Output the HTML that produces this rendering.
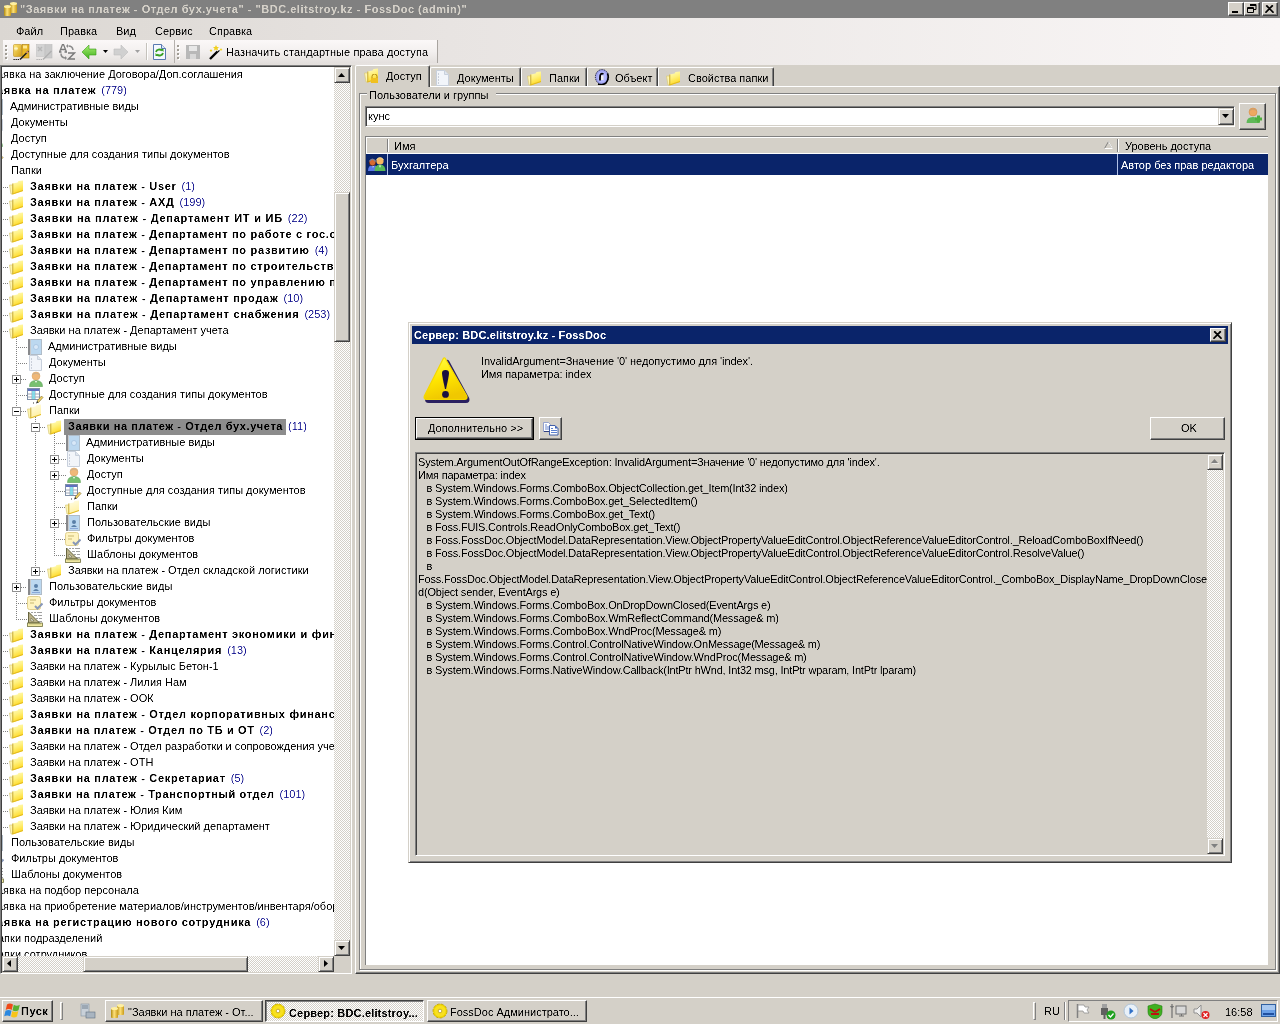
<!DOCTYPE html><html><head><meta charset="utf-8"><title>FossDoc</title><style>
*{margin:0;padding:0;box-sizing:border-box}
html,body{width:1280px;height:1024px;overflow:hidden}
body{position:relative;background:#d4d0c8;font-family:"Liberation Sans",sans-serif;font-size:11px;color:#000}
.a{position:absolute}
.t{position:absolute;white-space:nowrap;line-height:16px;font-size:11px;filter:url(#crisp)}
.b{font-weight:bold;letter-spacing:0.7px}
.cnt{color:#1c1c94}
.raised{border-style:solid;border-width:1px;border-color:#fff #404040 #404040 #fff;box-shadow:inset -1px -1px #808080}
.raised2{background:#d4d0c8;border-style:solid;border-width:1px;border-color:#fff #404040 #404040 #fff;box-shadow:inset -1px -1px #808080, inset 1px 1px #d4d0c8}
.sbtn{background:#d4d0c8;border-style:solid;border-width:1px;border-color:#d4d0c8 #404040 #404040 #d4d0c8;box-shadow:inset 1px 1px #fff, inset -1px -1px #808080}
.sunken{border-style:solid;border-width:1px;border-color:#808080 #fff #fff #808080;box-shadow:inset 1px 1px #404040, inset -1px -1px #d4d0c8}
.checker{background-color:#fff;background-image:linear-gradient(45deg,#d4d0c8 25%,transparent 25%,transparent 75%,#d4d0c8 75%),linear-gradient(45deg,#d4d0c8 25%,transparent 25%,transparent 75%,#d4d0c8 75%);background-size:2px 2px;background-position:0 0,1px 1px}
.dots-h{background-image:linear-gradient(90deg,#808080 50%,transparent 50%);background-size:2px 1px;height:1px}
.dots-v{background-image:linear-gradient(180deg,#808080 50%,transparent 50%);background-size:1px 2px;width:1px}
</style></head><body>
<svg width="0" height="0" style="position:absolute"><defs><filter id="crisp"><feComponentTransfer><feFuncA type="linear" slope="1.6" intercept="-0.3"/></feComponentTransfer></filter><linearGradient id="gf" x1="0" y1="0" x2=".3" y2="1"><stop offset="0" stop-color="#fffcc8"/><stop offset=".5" stop-color="#fff07a"/><stop offset="1" stop-color="#ffd820"/></linearGradient><linearGradient id="gfl" x1="0" y1="0" x2=".3" y2="1"><stop offset="0" stop-color="#fffde8"/><stop offset="1" stop-color="#fff0a0"/></linearGradient></defs></svg>
<div class="a" style="left:0;top:0;width:1280px;height:18px;background:#808080"></div>
<svg class="a" style="left:2px;top:1px" width="16" height="16" viewBox="0 0 16 16">
<defs><linearGradient id="gcyl" x1="0" x2="1"><stop offset="0" stop-color="#b08a10"/><stop offset=".45" stop-color="#ffe27a"/><stop offset="1" stop-color="#c89a18"/></linearGradient></defs>
<rect x="8" y="2" width="7" height="10" rx="1" fill="url(#gcyl)"/><ellipse cx="11.5" cy="2.5" rx="3.5" ry="1.5" fill="#fff0a0"/>
<rect x="2" y="5" width="7" height="10" rx="1" fill="url(#gcyl)"/><ellipse cx="5.5" cy="5.5" rx="3.5" ry="1.5" fill="#fff0a0"/>
</svg>
<div class="t b" style="left:20px;top:1px;color:#d4d0c8;letter-spacing:0.52px">"Заявки на платеж - Отдел бух.учета" - "BDC.elitstroy.kz - FossDoc (admin)"</div>
<div class="a raised2" style="left:1228px;top:2px;width:16px;height:14px"></div>
<div class="a" style="left:1232px;top:11px;width:6px;height:2px;background:#000"></div>
<div class="a raised2" style="left:1244px;top:2px;width:16px;height:14px"></div>
<svg class="a" style="left:1247px;top:4px" width="10" height="9"><path d="M3 0.5h6v5h-2M3 1.5h6M0.5 3.5h6v5h-6zM0.5 4.5h6" stroke="#000" fill="none" stroke-width="1"/></svg>
<div class="a raised2" style="left:1262px;top:2px;width:16px;height:14px"></div>
<svg class="a" style="left:1265px;top:5px" width="9" height="8"><path d="M1 0.5l7 7M8 0.5l-7 7M1.8 0.5l7 7M7.2 0.5l-7 7" stroke="#000" stroke-width="1.1"/></svg>
<div class="a" style="left:0;top:18px;width:1280px;height:47px;background:linear-gradient(90deg,#dbd7d2 0%,#e8e4e2 35%,#f9f6f6 100%)"></div>
<div class="t " style="left:16px;top:23px;">Файл</div>
<div class="t " style="left:60px;top:23px;">Правка</div>
<div class="t " style="left:116px;top:23px;">Вид</div>
<div class="t " style="left:155px;top:23px;">Сервис</div>
<div class="t " style="left:209px;top:23px;">Справка</div>
<div class="a" style="left:3px;top:40px;width:172px;height:23px;background:linear-gradient(180deg,#fbf8f8 0%,#f3f0ef 50%,#e4e0de 100%);border-right:1px solid #b5b1ad"></div>
<div class="a" style="left:175px;top:40px;width:263px;height:23px;background:linear-gradient(180deg,#fbf8f8 0%,#f3f0ef 50%,#e4e0de 100%);border-right:1px solid #a8a4a0"></div>
<div class="a" style="left:5px;top:45px;width:2px;height:2px;background:#a09c94;box-shadow:1px 1px #fff"></div>
<div class="a" style="left:5px;top:49px;width:2px;height:2px;background:#a09c94;box-shadow:1px 1px #fff"></div>
<div class="a" style="left:5px;top:53px;width:2px;height:2px;background:#a09c94;box-shadow:1px 1px #fff"></div>
<div class="a" style="left:5px;top:57px;width:2px;height:2px;background:#a09c94;box-shadow:1px 1px #fff"></div>
<div class="a" style="left:177px;top:45px;width:2px;height:2px;background:#a09c94;box-shadow:1px 1px #fff"></div>
<div class="a" style="left:177px;top:49px;width:2px;height:2px;background:#a09c94;box-shadow:1px 1px #fff"></div>
<div class="a" style="left:177px;top:53px;width:2px;height:2px;background:#a09c94;box-shadow:1px 1px #fff"></div>
<div class="a" style="left:177px;top:57px;width:2px;height:2px;background:#a09c94;box-shadow:1px 1px #fff"></div>
<svg class="a" style="left:13px;top:44px" width="17" height="17" viewBox="0 0 17 17">
<defs><linearGradient id="gi1" x1="0" y1="0" x2="1" y2="1"><stop offset="0" stop-color="#ffe878"/><stop offset="1" stop-color="#d09a10"/></linearGradient></defs>
<rect x=".5" y=".5" width="8" height="12" rx="1" fill="url(#gi1)" stroke="#c09020" stroke-width=".6"/>
<rect x="9" y=".5" width="7" height="13.5" fill="#e8b828" stroke="#a87808" stroke-width=".6"/><rect x="10" y="1.5" width="4" height="3" fill="#ffe890"/>
<path d="M3 2.5v4M1 4.5h4M1.6 3l2.8 3M4.4 3l-2.8 3" stroke="#fff8c8" stroke-width=".8"/>
<path d="M7 15.5l8.5-8.5" stroke="#202020" stroke-width="1.6"/><path d="M13.5 9l1.5-1.5" stroke="#f0a080" stroke-width="1.4"/>
<path d="M.5 15.5h6" stroke="#000" stroke-width="1.2" stroke-dasharray="1.2 .9"/></svg>
<svg class="a" style="left:36px;top:44px" width="17" height="17" viewBox="0 0 17 17">
<rect x=".5" y=".5" width="8" height="12" fill="#d4d4d4" stroke="#c4c4c4" stroke-width=".6"/>
<rect x="9" y=".5" width="7" height="13.5" fill="#cacaca" stroke="#bcbcbc" stroke-width=".6"/>
<path d="M2 3l4 4M6 3l-4 4" stroke="#b8b8b8" stroke-width="1.5"/>
<path d="M7 15.5l8.5-8.5" stroke="#b0b0b0" stroke-width="1.4"/>
<path d="M.5 15.5h6" stroke="#a8a8a8" stroke-width="1.1" stroke-dasharray="1.2 .9"/></svg>
<svg class="a" style="left:59px;top:44px" width="17" height="17" viewBox="0 0 17 17">
<path d="M0.5 8l3-7.5h1l3 7.5M2 5.5h4M0 8h2.5M5.5 8h2.5" stroke="#7a7a7a" stroke-width="1.3" fill="none"/>
<path d="M9 9h6.5l-6 6h6.5" stroke="#7a7a7a" stroke-width="1.5" fill="none"/>
<path d="M9.5 2q4 0 4.5 4" stroke="#8a8a8a" stroke-width="1.5" fill="none"/><path d="M9 0l-2 2 2 2z" fill="#8a8a8a"/>
<path d="M2 9.5q0 4 4 4.5" stroke="#8a8a8a" stroke-width="1.5" fill="none"/><path d="M6 12l2 2-2 2z" fill="#8a8a8a"/></svg>
<svg class="a" style="left:81px;top:44px" width="16" height="16" viewBox="0 0 16 16">
<defs><linearGradient id="ggr" x1="0" y1="0" x2="0" y2="1"><stop offset="0" stop-color="#a8f070"/><stop offset="1" stop-color="#40b020"/></linearGradient></defs>
<path d="M1 8l7-7v4h7v6h-7v4z" fill="url(#ggr)" stroke="#3a9a18" stroke-width=".6"/></svg>
<svg class="a" style="left:103px;top:50px" width="6" height="4"><path d="M0 0h5l-2.5 3z" fill="#000"/></svg>
<svg class="a" style="left:113px;top:44px" width="16" height="16" viewBox="0 0 16 16">
<path d="M15 8l-7-7v4h-7v6h7v4z" fill="#d0d0d0" stroke="#bdbdbd" stroke-width=".6"/></svg>
<svg class="a" style="left:135px;top:50px" width="6" height="4"><path d="M0 0h5l-2.5 3z" fill="#a0a0a0"/></svg>
<div class="a" style="left:146px;top:43px;width:1px;height:17px;background:#c5c2bc;box-shadow:1px 0 #fff"></div>
<svg class="a" style="left:152px;top:44px" width="15" height="16" viewBox="0 0 15 16">
<path d="M1.5 0.5h8l4 4v11h-12z" fill="#f4f8ff" stroke="#5a7ab0"/><path d="M9.5 0.5v4h4" fill="#dde8f8" stroke="#5a7ab0"/>
<path d="M4 8a3.5 3 0 0 1 6-1.5M11 9a3.5 3 0 0 1-6 1.5" stroke="#38a020" stroke-width="1.8" fill="none"/>
<path d="M8.5 5h3v3z M6.5 12h-3v-3z" fill="#38a020"/></svg>
<svg class="a" style="left:185px;top:44px" width="16" height="16" viewBox="0 0 16 16">
<rect x="1" y="1" width="14" height="14" fill="#b8b8b8"/><rect x="4" y="2" width="8" height="5" fill="#e8e8e8"/><rect x="5" y="10" width="6" height="5" fill="#d8d8d8"/></svg>
<svg class="a" style="left:208px;top:44px" width="16" height="16" viewBox="0 0 16 16">
<path d="M2 15l9-9" stroke="#000" stroke-width="2.4"/><path d="M9 7l2-2" stroke="#fff" stroke-width="1.5"/>
<path d="M8 1l1 2 2 0-1.5 1.5.5 2-2-1-2 1 .5-2L5 3h2z" fill="#f0d020"/><path d="M13 4l.5 1h1l-.8.8.3 1-1-.5-1 .5.3-1-.8-.8h1z" fill="#f0d020"/>
<path d="M3 5l.5 1h1l-.8.8.3 1-1-.5-1 .5.3-1-.8-.8h1z" fill="#e8c818"/></svg>
<div class="t " style="left:226px;top:44px;letter-spacing:0.07px">Назначить стандартные права доступа</div>
<div class="a" style="left:0;top:65px;width:352px;height:909px;background:#fff;border-style:solid;border-width:1px;border-color:#808080 #fff #fff #808080;box-shadow:inset 1px 1px #404040, inset -1px -1px #d4d0c8"></div>
<div class="a" style="left:2px;top:67px;width:332px;height:889px;overflow:hidden">
<div class="a dots-h" style="left:1px;top:120px;width:6px"></div>
<div class="a dots-h" style="left:1px;top:136px;width:6px"></div>
<div class="a dots-h" style="left:1px;top:152px;width:6px"></div>
<div class="a dots-h" style="left:1px;top:168px;width:6px"></div>
<div class="a dots-h" style="left:1px;top:184px;width:6px"></div>
<div class="a dots-h" style="left:1px;top:200px;width:6px"></div>
<div class="a dots-h" style="left:1px;top:216px;width:6px"></div>
<div class="a dots-h" style="left:1px;top:232px;width:6px"></div>
<div class="a dots-h" style="left:1px;top:248px;width:6px"></div>
<div class="a dots-h" style="left:1px;top:264px;width:6px"></div>
<div class="a dots-h" style="left:1px;top:568px;width:6px"></div>
<div class="a dots-h" style="left:1px;top:584px;width:6px"></div>
<div class="a dots-h" style="left:1px;top:600px;width:6px"></div>
<div class="a dots-h" style="left:1px;top:616px;width:6px"></div>
<div class="a dots-h" style="left:1px;top:632px;width:6px"></div>
<div class="a dots-h" style="left:1px;top:648px;width:6px"></div>
<div class="a dots-h" style="left:1px;top:664px;width:6px"></div>
<div class="a dots-h" style="left:1px;top:680px;width:6px"></div>
<div class="a dots-h" style="left:1px;top:696px;width:6px"></div>
<div class="a dots-h" style="left:1px;top:712px;width:6px"></div>
<div class="a dots-h" style="left:1px;top:728px;width:6px"></div>
<div class="a dots-h" style="left:1px;top:744px;width:6px"></div>
<div class="a dots-h" style="left:1px;top:760px;width:6px"></div>
<div class="a dots-v" style="left:14px;top:270px;height:283px"></div>
<div class="a dots-h" style="left:14px;top:280px;width:11px"></div>
<div class="a dots-h" style="left:14px;top:296px;width:11px"></div>
<div class="a dots-h" style="left:19px;top:312px;width:6px"></div>
<div class="a dots-h" style="left:14px;top:328px;width:11px"></div>
<div class="a dots-h" style="left:19px;top:344px;width:6px"></div>
<div class="a dots-h" style="left:19px;top:520px;width:6px"></div>
<div class="a dots-h" style="left:14px;top:536px;width:11px"></div>
<div class="a dots-h" style="left:14px;top:552px;width:11px"></div>
<div class="a dots-v" style="left:33px;top:350px;height:155px"></div>
<div class="a dots-h" style="left:38px;top:360px;width:6px"></div>
<div class="a dots-h" style="left:38px;top:504px;width:6px"></div>
<div class="a dots-v" style="left:52px;top:366px;height:123px"></div>
<div class="a dots-h" style="left:52px;top:376px;width:12px"></div>
<div class="a dots-h" style="left:57px;top:392px;width:7px"></div>
<div class="a dots-h" style="left:57px;top:408px;width:7px"></div>
<div class="a dots-h" style="left:52px;top:424px;width:12px"></div>
<div class="a dots-h" style="left:52px;top:440px;width:12px"></div>
<div class="a dots-h" style="left:57px;top:456px;width:7px"></div>
<div class="a dots-h" style="left:52px;top:472px;width:12px"></div>
<div class="a dots-h" style="left:52px;top:488px;width:12px"></div>
<div class="t " style="left:-5px;top:-1px;">аявка на заключение Договора/Доп.соглашения</div>
<div class="t b" style="left:-5px;top:15px;">аявка на платеж<span class="cnt" style="letter-spacing:0;font-weight:normal;margin-left:5px">(779)</span></div>
<svg class="a" style="left:-14px;top:32px" width="16" height="16" viewBox="0 0 16 16">
<rect x="1.5" y="0.5" width="13" height="15" fill="#bcd8f0" stroke="#b0bcc8"/><rect x="1" y="0" width="3" height="16" fill="#88898c"/><rect x="3" y="0" width="1" height="16" fill="#c8cacc"/>
<circle cx="9" cy="8" r="2.5" fill="#d8e8f8" stroke="#9ab8d8" stroke-width=".6"/></svg>
<div class="t " style="left:8px;top:31px;">Административные виды</div>
<svg class="a" style="left:-13px;top:48px" width="16" height="16" viewBox="0 0 16 16">
<path d="M1.5 .5h8l4 4v11h-12z" fill="#f2f5fa" stroke="#c8d0dc"/><path d="M9.5 .5v4h4" fill="#e0e6ee" stroke="#c8d0dc"/>
<path d="M3 4h1M3 7h1M3 10h1M3 13h1" stroke="#a0a8b8"/></svg>
<div class="t " style="left:9px;top:47px;">Документы</div>
<svg class="a" style="left:-14px;top:64px" width="16" height="16" viewBox="0 0 16 16">
<circle cx="8" cy="5" r="4" fill="#f0b878" stroke="#d8a060" stroke-width=".5"/><path d="M4.5 3.5q3.5-3 7 0" stroke="#c8b090" fill="none"/>
<path d="M1.5 15.5q0-6 6.5-6t6.5 6z" fill="#78c070" stroke="#58a050" stroke-width=".6"/><path d="M7 10l1 2 1-2" fill="#fff"/></svg>
<div class="t " style="left:9px;top:63px;">Доступ</div>
<svg class="a" style="left:-15px;top:80px" width="17" height="17" viewBox="0 0 17 17">
<rect x=".5" y="1.5" width="12" height="11" fill="#fff" stroke="#8090a8"/><rect x="1" y="2" width="11" height="2" fill="#6070c0"/>
<path d="M1 7h11M1 10h11M5 4v8M8 4v8" stroke="#a0a8b8"/><rect x="5" y="4" width="3" height="8" fill="#70d8e8" opacity=".8"/>
<path d="M10 14l4.5-5 1.5 1.5-4.5 5z" fill="#f0d060" stroke="#7a6a30" stroke-width=".6"/><path d="M10 14l-1 2.5 2.5-1z" fill="#222"/>
<path d="M6 16h2" stroke="#333" stroke-dasharray="1 1"/></svg>
<div class="t " style="left:9px;top:79px;">Доступные для создания типы документов</div>
<svg class="a" style="left:-14px;top:96px" width="16" height="16" viewBox="0 0 16 16">
<path d="M0.5 6h3.5v9h-2z" fill="#fff6b0" stroke="#d8c878" stroke-width=".7"/>
<path d="M3.5 4.5l5-1 1-1.5 4.5-.5v10.5l-10.5 3.5z" fill="url(#gfl)"/>
<path d="M3.8 4.5v10.5" stroke="#c8aa38" stroke-width="1"/>
<path d="M3.5 15l10.5-3.5" stroke="#e0b820" stroke-width="1"/>
</svg>
<div class="t " style="left:9px;top:95px;">Папки</div>
<svg class="a" style="left:7px;top:112px" width="16" height="16" viewBox="0 0 16 16">
<path d="M0.5 6h3.5v9h-2z" fill="#fff6b0" stroke="#d8c878" stroke-width=".7"/>
<path d="M3.5 4.5l5-1 1-1.5 4.5-.5v10.5l-10.5 3.5z" fill="url(#gf)"/>
<path d="M3.8 4.5v10.5" stroke="#c8aa38" stroke-width="1"/>
<path d="M3.5 15l10.5-3.5" stroke="#e0b820" stroke-width="1"/>
</svg>
<div class="t b" style="left:28px;top:111px;">Заявки на платеж - User<span class="cnt" style="letter-spacing:0;font-weight:normal;margin-left:5px">(1)</span></div>
<svg class="a" style="left:7px;top:128px" width="16" height="16" viewBox="0 0 16 16">
<path d="M0.5 6h3.5v9h-2z" fill="#fff6b0" stroke="#d8c878" stroke-width=".7"/>
<path d="M3.5 4.5l5-1 1-1.5 4.5-.5v10.5l-10.5 3.5z" fill="url(#gf)"/>
<path d="M3.8 4.5v10.5" stroke="#c8aa38" stroke-width="1"/>
<path d="M3.5 15l10.5-3.5" stroke="#e0b820" stroke-width="1"/>
</svg>
<div class="t b" style="left:28px;top:127px;">Заявки на платеж - АХД<span class="cnt" style="letter-spacing:0;font-weight:normal;margin-left:5px">(199)</span></div>
<svg class="a" style="left:7px;top:144px" width="16" height="16" viewBox="0 0 16 16">
<path d="M0.5 6h3.5v9h-2z" fill="#fff6b0" stroke="#d8c878" stroke-width=".7"/>
<path d="M3.5 4.5l5-1 1-1.5 4.5-.5v10.5l-10.5 3.5z" fill="url(#gf)"/>
<path d="M3.8 4.5v10.5" stroke="#c8aa38" stroke-width="1"/>
<path d="M3.5 15l10.5-3.5" stroke="#e0b820" stroke-width="1"/>
</svg>
<div class="t b" style="left:28px;top:143px;letter-spacing:0.77px">Заявки на платеж - Департамент ИТ и ИБ<span class="cnt" style="letter-spacing:0;font-weight:normal;margin-left:5px">(22)</span></div>
<svg class="a" style="left:7px;top:160px" width="16" height="16" viewBox="0 0 16 16">
<path d="M0.5 6h3.5v9h-2z" fill="#fff6b0" stroke="#d8c878" stroke-width=".7"/>
<path d="M3.5 4.5l5-1 1-1.5 4.5-.5v10.5l-10.5 3.5z" fill="url(#gf)"/>
<path d="M3.8 4.5v10.5" stroke="#c8aa38" stroke-width="1"/>
<path d="M3.5 15l10.5-3.5" stroke="#e0b820" stroke-width="1"/>
</svg>
<div class="t b" style="left:28px;top:159px;">Заявки на платеж - Департамент по работе с гос.органами</div>
<svg class="a" style="left:7px;top:176px" width="16" height="16" viewBox="0 0 16 16">
<path d="M0.5 6h3.5v9h-2z" fill="#fff6b0" stroke="#d8c878" stroke-width=".7"/>
<path d="M3.5 4.5l5-1 1-1.5 4.5-.5v10.5l-10.5 3.5z" fill="url(#gf)"/>
<path d="M3.8 4.5v10.5" stroke="#c8aa38" stroke-width="1"/>
<path d="M3.5 15l10.5-3.5" stroke="#e0b820" stroke-width="1"/>
</svg>
<div class="t b" style="left:28px;top:175px;">Заявки на платеж - Департамент по развитию<span class="cnt" style="letter-spacing:0;font-weight:normal;margin-left:5px">(4)</span></div>
<svg class="a" style="left:7px;top:192px" width="16" height="16" viewBox="0 0 16 16">
<path d="M0.5 6h3.5v9h-2z" fill="#fff6b0" stroke="#d8c878" stroke-width=".7"/>
<path d="M3.5 4.5l5-1 1-1.5 4.5-.5v10.5l-10.5 3.5z" fill="url(#gf)"/>
<path d="M3.8 4.5v10.5" stroke="#c8aa38" stroke-width="1"/>
<path d="M3.5 15l10.5-3.5" stroke="#e0b820" stroke-width="1"/>
</svg>
<div class="t b" style="left:28px;top:191px;">Заявки на платеж - Департамент по строительству</div>
<svg class="a" style="left:7px;top:208px" width="16" height="16" viewBox="0 0 16 16">
<path d="M0.5 6h3.5v9h-2z" fill="#fff6b0" stroke="#d8c878" stroke-width=".7"/>
<path d="M3.5 4.5l5-1 1-1.5 4.5-.5v10.5l-10.5 3.5z" fill="url(#gf)"/>
<path d="M3.8 4.5v10.5" stroke="#c8aa38" stroke-width="1"/>
<path d="M3.5 15l10.5-3.5" stroke="#e0b820" stroke-width="1"/>
</svg>
<div class="t b" style="left:28px;top:207px;">Заявки на платеж - Департамент по управлению проектами</div>
<svg class="a" style="left:7px;top:224px" width="16" height="16" viewBox="0 0 16 16">
<path d="M0.5 6h3.5v9h-2z" fill="#fff6b0" stroke="#d8c878" stroke-width=".7"/>
<path d="M3.5 4.5l5-1 1-1.5 4.5-.5v10.5l-10.5 3.5z" fill="url(#gf)"/>
<path d="M3.8 4.5v10.5" stroke="#c8aa38" stroke-width="1"/>
<path d="M3.5 15l10.5-3.5" stroke="#e0b820" stroke-width="1"/>
</svg>
<div class="t b" style="left:28px;top:223px;letter-spacing:0.74px">Заявки на платеж - Департамент продаж<span class="cnt" style="letter-spacing:0;font-weight:normal;margin-left:5px">(10)</span></div>
<svg class="a" style="left:7px;top:240px" width="16" height="16" viewBox="0 0 16 16">
<path d="M0.5 6h3.5v9h-2z" fill="#fff6b0" stroke="#d8c878" stroke-width=".7"/>
<path d="M3.5 4.5l5-1 1-1.5 4.5-.5v10.5l-10.5 3.5z" fill="url(#gf)"/>
<path d="M3.8 4.5v10.5" stroke="#c8aa38" stroke-width="1"/>
<path d="M3.5 15l10.5-3.5" stroke="#e0b820" stroke-width="1"/>
</svg>
<div class="t b" style="left:28px;top:239px;letter-spacing:0.75px">Заявки на платеж - Департамент снабжения<span class="cnt" style="letter-spacing:0;font-weight:normal;margin-left:5px">(253)</span></div>
<svg class="a" style="left:7px;top:256px" width="16" height="16" viewBox="0 0 16 16">
<path d="M0.5 6h3.5v9h-2z" fill="#fff6b0" stroke="#d8c878" stroke-width=".7"/>
<path d="M3.5 4.5l5-1 1-1.5 4.5-.5v10.5l-10.5 3.5z" fill="url(#gf)"/>
<path d="M3.8 4.5v10.5" stroke="#c8aa38" stroke-width="1"/>
<path d="M3.5 15l10.5-3.5" stroke="#e0b820" stroke-width="1"/>
</svg>
<div class="t " style="left:28px;top:255px;">Заявки на платеж - Департамент учета</div>
<svg class="a" style="left:25px;top:272px" width="16" height="16" viewBox="0 0 16 16">
<rect x="1.5" y="0.5" width="13" height="15" fill="#bcd8f0" stroke="#b0bcc8"/><rect x="1" y="0" width="3" height="16" fill="#88898c"/><rect x="3" y="0" width="1" height="16" fill="#c8cacc"/>
<circle cx="9" cy="8" r="2.5" fill="#d8e8f8" stroke="#9ab8d8" stroke-width=".6"/></svg>
<div class="t " style="left:46px;top:271px;">Административные виды</div>
<svg class="a" style="left:26px;top:288px" width="16" height="16" viewBox="0 0 16 16">
<path d="M1.5 .5h8l4 4v11h-12z" fill="#f2f5fa" stroke="#c8d0dc"/><path d="M9.5 .5v4h4" fill="#e0e6ee" stroke="#c8d0dc"/>
<path d="M3 4h1M3 7h1M3 10h1M3 13h1" stroke="#a0a8b8"/></svg>
<div class="t " style="left:47px;top:287px;">Документы</div>
<svg class="a" style="left:26px;top:304px" width="16" height="16" viewBox="0 0 16 16">
<circle cx="8" cy="5" r="4" fill="#f0b878" stroke="#d8a060" stroke-width=".5"/><path d="M4.5 3.5q3.5-3 7 0" stroke="#c8b090" fill="none"/>
<path d="M1.5 15.5q0-6 6.5-6t6.5 6z" fill="#78c070" stroke="#58a050" stroke-width=".6"/><path d="M7 10l1 2 1-2" fill="#fff"/></svg>
<div class="a" style="left:10px;top:308px;width:9px;height:9px;border:1px solid #919191;background:#fff"></div>
<div class="a" style="left:12px;top:312px;width:5px;height:1px;background:#000"></div>
<div class="a" style="left:14px;top:310px;width:1px;height:5px;background:#000"></div>
<div class="t " style="left:47px;top:303px;">Доступ</div>
<svg class="a" style="left:25px;top:320px" width="17" height="17" viewBox="0 0 17 17">
<rect x=".5" y="1.5" width="12" height="11" fill="#fff" stroke="#8090a8"/><rect x="1" y="2" width="11" height="2" fill="#6070c0"/>
<path d="M1 7h11M1 10h11M5 4v8M8 4v8" stroke="#a0a8b8"/><rect x="5" y="4" width="3" height="8" fill="#70d8e8" opacity=".8"/>
<path d="M10 14l4.5-5 1.5 1.5-4.5 5z" fill="#f0d060" stroke="#7a6a30" stroke-width=".6"/><path d="M10 14l-1 2.5 2.5-1z" fill="#222"/>
<path d="M6 16h2" stroke="#333" stroke-dasharray="1 1"/></svg>
<div class="t " style="left:47px;top:319px;">Доступные для создания типы документов</div>
<svg class="a" style="left:25px;top:336px" width="16" height="16" viewBox="0 0 16 16">
<path d="M0.5 6h3.5v9h-2z" fill="#fff6b0" stroke="#d8c878" stroke-width=".7"/>
<path d="M3.5 4.5l5-1 1-1.5 4.5-.5v10.5l-10.5 3.5z" fill="url(#gfl)"/>
<path d="M3.8 4.5v10.5" stroke="#c8aa38" stroke-width="1"/>
<path d="M3.5 15l10.5-3.5" stroke="#e0b820" stroke-width="1"/>
</svg>
<div class="a" style="left:10px;top:340px;width:9px;height:9px;border:1px solid #919191;background:#fff"></div>
<div class="a" style="left:12px;top:344px;width:5px;height:1px;background:#000"></div>
<div class="t " style="left:47px;top:335px;">Папки</div>
<svg class="a" style="left:45px;top:352px" width="16" height="16" viewBox="0 0 16 16">
<path d="M0.5 6h3.5v9h-2z" fill="#fff6b0" stroke="#d8c878" stroke-width=".7"/>
<path d="M3.5 4.5l5-1 1-1.5 4.5-.5v10.5l-10.5 3.5z" fill="url(#gf)"/>
<path d="M3.8 4.5v10.5" stroke="#c8aa38" stroke-width="1"/>
<path d="M3.5 15l10.5-3.5" stroke="#e0b820" stroke-width="1"/>
</svg>
<div class="a" style="left:29px;top:356px;width:9px;height:9px;border:1px solid #919191;background:#fff"></div>
<div class="a" style="left:31px;top:360px;width:5px;height:1px;background:#000"></div>
<div class="a" style="left:62px;top:352px;width:222px;height:16px;background:#8c8c8c"></div>
<div class="t b" style="left:66px;top:351px;letter-spacing:0.59px">Заявки на платеж - Отдел бух.учета<span class="cnt" style="letter-spacing:0;font-weight:normal;margin-left:5px">(11)</span></div>
<svg class="a" style="left:63px;top:368px" width="16" height="16" viewBox="0 0 16 16">
<rect x="1.5" y="0.5" width="13" height="15" fill="#bcd8f0" stroke="#b0bcc8"/><rect x="1" y="0" width="3" height="16" fill="#88898c"/><rect x="3" y="0" width="1" height="16" fill="#c8cacc"/>
<circle cx="9" cy="8" r="2.5" fill="#d8e8f8" stroke="#9ab8d8" stroke-width=".6"/></svg>
<div class="t " style="left:84px;top:367px;">Административные виды</div>
<svg class="a" style="left:64px;top:384px" width="16" height="16" viewBox="0 0 16 16">
<path d="M1.5 .5h8l4 4v11h-12z" fill="#f2f5fa" stroke="#c8d0dc"/><path d="M9.5 .5v4h4" fill="#e0e6ee" stroke="#c8d0dc"/>
<path d="M3 4h1M3 7h1M3 10h1M3 13h1" stroke="#a0a8b8"/></svg>
<div class="a" style="left:48px;top:388px;width:9px;height:9px;border:1px solid #919191;background:#fff"></div>
<div class="a" style="left:50px;top:392px;width:5px;height:1px;background:#000"></div>
<div class="a" style="left:52px;top:390px;width:1px;height:5px;background:#000"></div>
<div class="t " style="left:85px;top:383px;">Документы</div>
<svg class="a" style="left:64px;top:400px" width="16" height="16" viewBox="0 0 16 16">
<circle cx="8" cy="5" r="4" fill="#f0b878" stroke="#d8a060" stroke-width=".5"/><path d="M4.5 3.5q3.5-3 7 0" stroke="#c8b090" fill="none"/>
<path d="M1.5 15.5q0-6 6.5-6t6.5 6z" fill="#78c070" stroke="#58a050" stroke-width=".6"/><path d="M7 10l1 2 1-2" fill="#fff"/></svg>
<div class="a" style="left:48px;top:404px;width:9px;height:9px;border:1px solid #919191;background:#fff"></div>
<div class="a" style="left:50px;top:408px;width:5px;height:1px;background:#000"></div>
<div class="a" style="left:52px;top:406px;width:1px;height:5px;background:#000"></div>
<div class="t " style="left:85px;top:399px;">Доступ</div>
<svg class="a" style="left:63px;top:416px" width="17" height="17" viewBox="0 0 17 17">
<rect x=".5" y="1.5" width="12" height="11" fill="#fff" stroke="#8090a8"/><rect x="1" y="2" width="11" height="2" fill="#6070c0"/>
<path d="M1 7h11M1 10h11M5 4v8M8 4v8" stroke="#a0a8b8"/><rect x="5" y="4" width="3" height="8" fill="#70d8e8" opacity=".8"/>
<path d="M10 14l4.5-5 1.5 1.5-4.5 5z" fill="#f0d060" stroke="#7a6a30" stroke-width=".6"/><path d="M10 14l-1 2.5 2.5-1z" fill="#222"/>
<path d="M6 16h2" stroke="#333" stroke-dasharray="1 1"/></svg>
<div class="t " style="left:85px;top:415px;">Доступные для создания типы документов</div>
<svg class="a" style="left:63px;top:432px" width="16" height="16" viewBox="0 0 16 16">
<path d="M0.5 6h3.5v9h-2z" fill="#fff6b0" stroke="#d8c878" stroke-width=".7"/>
<path d="M3.5 4.5l5-1 1-1.5 4.5-.5v10.5l-10.5 3.5z" fill="url(#gfl)"/>
<path d="M3.8 4.5v10.5" stroke="#c8aa38" stroke-width="1"/>
<path d="M3.5 15l10.5-3.5" stroke="#e0b820" stroke-width="1"/>
</svg>
<div class="t " style="left:85px;top:431px;">Папки</div>
<svg class="a" style="left:63px;top:448px" width="16" height="16" viewBox="0 0 16 16">
<rect x="1.5" y="0.5" width="13" height="15" fill="#bcd8f0" stroke="#b0bcc8"/><rect x="1" y="0" width="3" height="16" fill="#88898c"/><rect x="3" y="0" width="1" height="16" fill="#c8cacc"/>
<circle cx="9" cy="7" r="2" fill="#5a80a8"/><path d="M6 12q3-4 6 0z" fill="#5a80a8"/><path d="M5 13.5h8" stroke="#8aa8d8"/></svg>
<div class="a" style="left:48px;top:452px;width:9px;height:9px;border:1px solid #919191;background:#fff"></div>
<div class="a" style="left:50px;top:456px;width:5px;height:1px;background:#000"></div>
<div class="a" style="left:52px;top:454px;width:1px;height:5px;background:#000"></div>
<div class="t " style="left:85px;top:447px;">Пользовательские виды</div>
<svg class="a" style="left:63px;top:464px" width="16" height="16" viewBox="0 0 16 16">
<rect x=".5" y="1.5" width="13" height="13" rx="2" fill="#fff4c0" stroke="#e0d090"/><path d="M3 5h6M3 8h4" stroke="#c8b870"/>
<path d="M8 11l2.5 2.5 5-5" stroke="#8898b8" stroke-width="2" fill="none"/></svg>
<div class="t " style="left:85px;top:463px;">Фильтры документов</div>
<svg class="a" style="left:63px;top:480px" width="16" height="16" viewBox="0 0 16 16">
<path d="M4 1.5h2M7 1.5h2M10 1.5h5M7 4.5h3M11 4.5h4M9 7.5h2M12 7.5h3M11 10.5h4" stroke="#a0a0a0"/>
<path d="M1.5 1l11 11h-11z" fill="#b8b088" stroke="#5a5830" stroke-width=".9"/><path d="M4 7v3h3z" fill="#f8f8f0" stroke="#5a5830" stroke-width=".5"/>
<rect x=".5" y="12" width="15" height="3.5" fill="#f0e8a0" stroke="#707040" stroke-width=".8"/><path d="M3 12v1.5M5 12v1.5M7 12v1.5M9 12v1.5M11 12v1.5M13 12v1.5" stroke="#707040" stroke-width=".6"/></svg>
<div class="t " style="left:85px;top:479px;">Шаблоны документов</div>
<svg class="a" style="left:45px;top:496px" width="16" height="16" viewBox="0 0 16 16">
<path d="M0.5 6h3.5v9h-2z" fill="#fff6b0" stroke="#d8c878" stroke-width=".7"/>
<path d="M3.5 4.5l5-1 1-1.5 4.5-.5v10.5l-10.5 3.5z" fill="url(#gf)"/>
<path d="M3.8 4.5v10.5" stroke="#c8aa38" stroke-width="1"/>
<path d="M3.5 15l10.5-3.5" stroke="#e0b820" stroke-width="1"/>
</svg>
<div class="a" style="left:29px;top:500px;width:9px;height:9px;border:1px solid #919191;background:#fff"></div>
<div class="a" style="left:31px;top:504px;width:5px;height:1px;background:#000"></div>
<div class="a" style="left:33px;top:502px;width:1px;height:5px;background:#000"></div>
<div class="t " style="left:66px;top:495px;">Заявки на платеж - Отдел складской логистики</div>
<svg class="a" style="left:25px;top:512px" width="16" height="16" viewBox="0 0 16 16">
<rect x="1.5" y="0.5" width="13" height="15" fill="#bcd8f0" stroke="#b0bcc8"/><rect x="1" y="0" width="3" height="16" fill="#88898c"/><rect x="3" y="0" width="1" height="16" fill="#c8cacc"/>
<circle cx="9" cy="7" r="2" fill="#5a80a8"/><path d="M6 12q3-4 6 0z" fill="#5a80a8"/><path d="M5 13.5h8" stroke="#8aa8d8"/></svg>
<div class="a" style="left:10px;top:516px;width:9px;height:9px;border:1px solid #919191;background:#fff"></div>
<div class="a" style="left:12px;top:520px;width:5px;height:1px;background:#000"></div>
<div class="a" style="left:14px;top:518px;width:1px;height:5px;background:#000"></div>
<div class="t " style="left:47px;top:511px;">Пользовательские виды</div>
<svg class="a" style="left:25px;top:528px" width="16" height="16" viewBox="0 0 16 16">
<rect x=".5" y="1.5" width="13" height="13" rx="2" fill="#fff4c0" stroke="#e0d090"/><path d="M3 5h6M3 8h4" stroke="#c8b870"/>
<path d="M8 11l2.5 2.5 5-5" stroke="#8898b8" stroke-width="2" fill="none"/></svg>
<div class="t " style="left:47px;top:527px;">Фильтры документов</div>
<svg class="a" style="left:25px;top:544px" width="16" height="16" viewBox="0 0 16 16">
<path d="M4 1.5h2M7 1.5h2M10 1.5h5M7 4.5h3M11 4.5h4M9 7.5h2M12 7.5h3M11 10.5h4" stroke="#a0a0a0"/>
<path d="M1.5 1l11 11h-11z" fill="#b8b088" stroke="#5a5830" stroke-width=".9"/><path d="M4 7v3h3z" fill="#f8f8f0" stroke="#5a5830" stroke-width=".5"/>
<rect x=".5" y="12" width="15" height="3.5" fill="#f0e8a0" stroke="#707040" stroke-width=".8"/><path d="M3 12v1.5M5 12v1.5M7 12v1.5M9 12v1.5M11 12v1.5M13 12v1.5" stroke="#707040" stroke-width=".6"/></svg>
<div class="t " style="left:47px;top:543px;">Шаблоны документов</div>
<svg class="a" style="left:7px;top:560px" width="16" height="16" viewBox="0 0 16 16">
<path d="M0.5 6h3.5v9h-2z" fill="#fff6b0" stroke="#d8c878" stroke-width=".7"/>
<path d="M3.5 4.5l5-1 1-1.5 4.5-.5v10.5l-10.5 3.5z" fill="url(#gf)"/>
<path d="M3.8 4.5v10.5" stroke="#c8aa38" stroke-width="1"/>
<path d="M3.5 15l10.5-3.5" stroke="#e0b820" stroke-width="1"/>
</svg>
<div class="t b" style="left:28px;top:559px;">Заявки на платеж - Департамент экономики и финансов</div>
<svg class="a" style="left:7px;top:576px" width="16" height="16" viewBox="0 0 16 16">
<path d="M0.5 6h3.5v9h-2z" fill="#fff6b0" stroke="#d8c878" stroke-width=".7"/>
<path d="M3.5 4.5l5-1 1-1.5 4.5-.5v10.5l-10.5 3.5z" fill="url(#gf)"/>
<path d="M3.8 4.5v10.5" stroke="#c8aa38" stroke-width="1"/>
<path d="M3.5 15l10.5-3.5" stroke="#e0b820" stroke-width="1"/>
</svg>
<div class="t b" style="left:28px;top:575px;">Заявки на платеж - Канцелярия<span class="cnt" style="letter-spacing:0;font-weight:normal;margin-left:5px">(13)</span></div>
<svg class="a" style="left:7px;top:592px" width="16" height="16" viewBox="0 0 16 16">
<path d="M0.5 6h3.5v9h-2z" fill="#fff6b0" stroke="#d8c878" stroke-width=".7"/>
<path d="M3.5 4.5l5-1 1-1.5 4.5-.5v10.5l-10.5 3.5z" fill="url(#gf)"/>
<path d="M3.8 4.5v10.5" stroke="#c8aa38" stroke-width="1"/>
<path d="M3.5 15l10.5-3.5" stroke="#e0b820" stroke-width="1"/>
</svg>
<div class="t " style="left:28px;top:591px;">Заявки на платеж - Курылыс Бетон-1</div>
<svg class="a" style="left:7px;top:608px" width="16" height="16" viewBox="0 0 16 16">
<path d="M0.5 6h3.5v9h-2z" fill="#fff6b0" stroke="#d8c878" stroke-width=".7"/>
<path d="M3.5 4.5l5-1 1-1.5 4.5-.5v10.5l-10.5 3.5z" fill="url(#gf)"/>
<path d="M3.8 4.5v10.5" stroke="#c8aa38" stroke-width="1"/>
<path d="M3.5 15l10.5-3.5" stroke="#e0b820" stroke-width="1"/>
</svg>
<div class="t " style="left:28px;top:607px;">Заявки на платеж - Лилия Нам</div>
<svg class="a" style="left:7px;top:624px" width="16" height="16" viewBox="0 0 16 16">
<path d="M0.5 6h3.5v9h-2z" fill="#fff6b0" stroke="#d8c878" stroke-width=".7"/>
<path d="M3.5 4.5l5-1 1-1.5 4.5-.5v10.5l-10.5 3.5z" fill="url(#gf)"/>
<path d="M3.8 4.5v10.5" stroke="#c8aa38" stroke-width="1"/>
<path d="M3.5 15l10.5-3.5" stroke="#e0b820" stroke-width="1"/>
</svg>
<div class="t " style="left:28px;top:623px;">Заявки на платеж - ООК</div>
<svg class="a" style="left:7px;top:640px" width="16" height="16" viewBox="0 0 16 16">
<path d="M0.5 6h3.5v9h-2z" fill="#fff6b0" stroke="#d8c878" stroke-width=".7"/>
<path d="M3.5 4.5l5-1 1-1.5 4.5-.5v10.5l-10.5 3.5z" fill="url(#gf)"/>
<path d="M3.8 4.5v10.5" stroke="#c8aa38" stroke-width="1"/>
<path d="M3.5 15l10.5-3.5" stroke="#e0b820" stroke-width="1"/>
</svg>
<div class="t b" style="left:28px;top:639px;">Заявки на платеж - Отдел корпоративных финансов</div>
<svg class="a" style="left:7px;top:656px" width="16" height="16" viewBox="0 0 16 16">
<path d="M0.5 6h3.5v9h-2z" fill="#fff6b0" stroke="#d8c878" stroke-width=".7"/>
<path d="M3.5 4.5l5-1 1-1.5 4.5-.5v10.5l-10.5 3.5z" fill="url(#gf)"/>
<path d="M3.8 4.5v10.5" stroke="#c8aa38" stroke-width="1"/>
<path d="M3.5 15l10.5-3.5" stroke="#e0b820" stroke-width="1"/>
</svg>
<div class="t b" style="left:28px;top:655px;letter-spacing:0.64px">Заявки на платеж - Отдел по ТБ и ОТ<span class="cnt" style="letter-spacing:0;font-weight:normal;margin-left:5px">(2)</span></div>
<svg class="a" style="left:7px;top:672px" width="16" height="16" viewBox="0 0 16 16">
<path d="M0.5 6h3.5v9h-2z" fill="#fff6b0" stroke="#d8c878" stroke-width=".7"/>
<path d="M3.5 4.5l5-1 1-1.5 4.5-.5v10.5l-10.5 3.5z" fill="url(#gf)"/>
<path d="M3.8 4.5v10.5" stroke="#c8aa38" stroke-width="1"/>
<path d="M3.5 15l10.5-3.5" stroke="#e0b820" stroke-width="1"/>
</svg>
<div class="t " style="left:28px;top:671px;">Заявки на платеж - Отдел разработки и сопровождения учетных систем</div>
<svg class="a" style="left:7px;top:688px" width="16" height="16" viewBox="0 0 16 16">
<path d="M0.5 6h3.5v9h-2z" fill="#fff6b0" stroke="#d8c878" stroke-width=".7"/>
<path d="M3.5 4.5l5-1 1-1.5 4.5-.5v10.5l-10.5 3.5z" fill="url(#gf)"/>
<path d="M3.8 4.5v10.5" stroke="#c8aa38" stroke-width="1"/>
<path d="M3.5 15l10.5-3.5" stroke="#e0b820" stroke-width="1"/>
</svg>
<div class="t " style="left:28px;top:687px;">Заявки на платеж - ОТН</div>
<svg class="a" style="left:7px;top:704px" width="16" height="16" viewBox="0 0 16 16">
<path d="M0.5 6h3.5v9h-2z" fill="#fff6b0" stroke="#d8c878" stroke-width=".7"/>
<path d="M3.5 4.5l5-1 1-1.5 4.5-.5v10.5l-10.5 3.5z" fill="url(#gf)"/>
<path d="M3.8 4.5v10.5" stroke="#c8aa38" stroke-width="1"/>
<path d="M3.5 15l10.5-3.5" stroke="#e0b820" stroke-width="1"/>
</svg>
<div class="t b" style="left:28px;top:703px;">Заявки на платеж - Секретариат<span class="cnt" style="letter-spacing:0;font-weight:normal;margin-left:5px">(5)</span></div>
<svg class="a" style="left:7px;top:720px" width="16" height="16" viewBox="0 0 16 16">
<path d="M0.5 6h3.5v9h-2z" fill="#fff6b0" stroke="#d8c878" stroke-width=".7"/>
<path d="M3.5 4.5l5-1 1-1.5 4.5-.5v10.5l-10.5 3.5z" fill="url(#gf)"/>
<path d="M3.8 4.5v10.5" stroke="#c8aa38" stroke-width="1"/>
<path d="M3.5 15l10.5-3.5" stroke="#e0b820" stroke-width="1"/>
</svg>
<div class="t b" style="left:28px;top:719px;letter-spacing:0.64px">Заявки на платеж - Транспортный отдел<span class="cnt" style="letter-spacing:0;font-weight:normal;margin-left:5px">(101)</span></div>
<svg class="a" style="left:7px;top:736px" width="16" height="16" viewBox="0 0 16 16">
<path d="M0.5 6h3.5v9h-2z" fill="#fff6b0" stroke="#d8c878" stroke-width=".7"/>
<path d="M3.5 4.5l5-1 1-1.5 4.5-.5v10.5l-10.5 3.5z" fill="url(#gf)"/>
<path d="M3.8 4.5v10.5" stroke="#c8aa38" stroke-width="1"/>
<path d="M3.5 15l10.5-3.5" stroke="#e0b820" stroke-width="1"/>
</svg>
<div class="t " style="left:28px;top:735px;">Заявки на платеж - Юлия Ким</div>
<svg class="a" style="left:7px;top:752px" width="16" height="16" viewBox="0 0 16 16">
<path d="M0.5 6h3.5v9h-2z" fill="#fff6b0" stroke="#d8c878" stroke-width=".7"/>
<path d="M3.5 4.5l5-1 1-1.5 4.5-.5v10.5l-10.5 3.5z" fill="url(#gf)"/>
<path d="M3.8 4.5v10.5" stroke="#c8aa38" stroke-width="1"/>
<path d="M3.5 15l10.5-3.5" stroke="#e0b820" stroke-width="1"/>
</svg>
<div class="t " style="left:28px;top:751px;">Заявки на платеж - Юридический департамент</div>
<svg class="a" style="left:-14px;top:768px" width="16" height="16" viewBox="0 0 16 16">
<rect x="1.5" y="0.5" width="13" height="15" fill="#bcd8f0" stroke="#b0bcc8"/><rect x="1" y="0" width="3" height="16" fill="#88898c"/><rect x="3" y="0" width="1" height="16" fill="#c8cacc"/>
<circle cx="9" cy="7" r="2" fill="#5a80a8"/><path d="M6 12q3-4 6 0z" fill="#5a80a8"/><path d="M5 13.5h8" stroke="#8aa8d8"/></svg>
<div class="t " style="left:9px;top:767px;">Пользовательские виды</div>
<svg class="a" style="left:-14px;top:784px" width="16" height="16" viewBox="0 0 16 16">
<rect x=".5" y="1.5" width="13" height="13" rx="2" fill="#fff4c0" stroke="#e0d090"/><path d="M3 5h6M3 8h4" stroke="#c8b870"/>
<path d="M8 11l2.5 2.5 5-5" stroke="#8898b8" stroke-width="2" fill="none"/></svg>
<div class="t " style="left:9px;top:783px;">Фильтры документов</div>
<svg class="a" style="left:-14px;top:800px" width="16" height="16" viewBox="0 0 16 16">
<path d="M4 1.5h2M7 1.5h2M10 1.5h5M7 4.5h3M11 4.5h4M9 7.5h2M12 7.5h3M11 10.5h4" stroke="#a0a0a0"/>
<path d="M1.5 1l11 11h-11z" fill="#b8b088" stroke="#5a5830" stroke-width=".9"/><path d="M4 7v3h3z" fill="#f8f8f0" stroke="#5a5830" stroke-width=".5"/>
<rect x=".5" y="12" width="15" height="3.5" fill="#f0e8a0" stroke="#707040" stroke-width=".8"/><path d="M3 12v1.5M5 12v1.5M7 12v1.5M9 12v1.5M11 12v1.5M13 12v1.5" stroke="#707040" stroke-width=".6"/></svg>
<div class="t " style="left:9px;top:799px;">Шаблоны документов</div>
<div class="t " style="left:-5px;top:815px;">аявка на подбор персонала</div>
<div class="t " style="left:-5px;top:831px;">аявка на приобретение материалов/инструментов/инвентаря/оборудования</div>
<div class="t b" style="left:-5px;top:847px;">аявка на регистрацию нового сотрудника<span class="cnt" style="letter-spacing:0;font-weight:normal;margin-left:5px">(6)</span></div>
<div class="t " style="left:-4px;top:863px;">апки подразделений</div>
<div class="t " style="left:-4px;top:879px;">апки сотрудников</div>
</div>
<div class="a checker" style="left:334px;top:67px;width:16px;height:889px"></div>
<div class="a sbtn" style="left:334px;top:67px;width:16px;height:16px"></div>
<svg class="a" style="left:338px;top:73px" width="7" height="4"><path d="M0 4h7l-3.5-4z" fill="#000"/></svg>
<div class="a sbtn" style="left:334px;top:192px;width:16px;height:150px"></div>
<div class="a sbtn" style="left:334px;top:940px;width:16px;height:16px"></div>
<svg class="a" style="left:338px;top:946px" width="7" height="4"><path d="M0 0h7l-3.5 4z" fill="#000"/></svg>
<div class="a checker" style="left:2px;top:956px;width:332px;height:16px"></div>
<div class="a sbtn" style="left:2px;top:956px;width:16px;height:16px"></div>
<svg class="a" style="left:7px;top:960px" width="4" height="7"><path d="M4 0v7l-4-3.5z" fill="#000"/></svg>
<div class="a sbtn" style="left:83px;top:956px;width:165px;height:16px"></div>
<div class="a sbtn" style="left:318px;top:956px;width:16px;height:16px"></div>
<svg class="a" style="left:324px;top:960px" width="4" height="7"><path d="M0 0v7l4-3.5z" fill="#000"/></svg>
<div class="a" style="left:334px;top:956px;width:16px;height:16px;background:#d4d0c8"></div>
<div class="a" style="left:355px;top:86px;width:925px;height:888px;border-style:solid;border-width:1px;border-color:#fff #404040 #404040 #fff;box-shadow:inset -1px -1px #808080"></div>
<div class="a" style="left:430px;top:67px;width:91px;height:19px;background:#d4d0c8;border-style:solid;border-width:1px 1px 0 1px;border-color:#fff #404040 #fff #fff;border-radius:2px 2px 0 0;box-shadow:inset -1px 0 #808080"></div>
<svg class="a" style="left:435px;top:70px" width="16" height="16" viewBox="0 0 16 16">
<path d="M1.5 .5h8l4 4v11h-12z" fill="#f2f5fa" stroke="#c8d0dc"/><path d="M9.5 .5v4h4" fill="#e0e6ee" stroke="#c8d0dc"/>
<path d="M3 4h1M3 7h1M3 10h1M3 13h1" stroke="#a0a8b8"/></svg>
<div class="t " style="left:457px;top:70px;">Документы</div>
<div class="a" style="left:521px;top:67px;width:66px;height:19px;background:#d4d0c8;border-style:solid;border-width:1px 1px 0 1px;border-color:#fff #404040 #fff #fff;border-radius:2px 2px 0 0;box-shadow:inset -1px 0 #808080"></div>
<svg class="a" style="left:527px;top:70px" width="16" height="16" viewBox="0 0 16 16">
<path d="M0.5 6h3.5v9h-2z" fill="#fff6b0" stroke="#d8c878" stroke-width=".7"/>
<path d="M3.5 4.5l5-1 1-1.5 4.5-.5v10.5l-10.5 3.5z" fill="url(#gf)"/>
<path d="M3.8 4.5v10.5" stroke="#c8aa38" stroke-width="1"/>
<path d="M3.5 15l10.5-3.5" stroke="#e0b820" stroke-width="1"/>
</svg>
<div class="t " style="left:549px;top:70px;">Папки</div>
<div class="a" style="left:587px;top:67px;width:71px;height:19px;background:#d4d0c8;border-style:solid;border-width:1px 1px 0 1px;border-color:#fff #404040 #fff #fff;border-radius:2px 2px 0 0;box-shadow:inset -1px 0 #808080"></div>
<svg class="a" style="left:594px;top:69px" width="16" height="16" viewBox="0 0 16 16">
<ellipse cx="8" cy="8" rx="6.6" ry="7.4" fill="#a0a4f0" stroke="#101030" stroke-width="1" stroke-dasharray="1.3 1"/>
<path d="M13.5 4.5q2 5-1.5 9.5-3.5 2.5-8 1.3" stroke="#000" stroke-width="1.6" fill="none"/>
<ellipse cx="8" cy="8" rx="4.5" ry="5.5" fill="#b4b8ff"/>
<path d="M9.5 5q-3.5-1.5-3.5 3.5v3" stroke="#000" stroke-width="1.8" fill="none"/><rect x="7" y="6.5" width="2.5" height="4.5" fill="#f0f0f0"/></svg>
<div class="t " style="left:615px;top:70px;">Объект</div>
<div class="a" style="left:658px;top:67px;width:116px;height:19px;background:#d4d0c8;border-style:solid;border-width:1px 1px 0 1px;border-color:#fff #404040 #fff #fff;border-radius:2px 2px 0 0;box-shadow:inset -1px 0 #808080"></div>
<svg class="a" style="left:666px;top:70px" width="16" height="16" viewBox="0 0 16 16">
<path d="M0.5 6h3.5v9h-2z" fill="#fff6b0" stroke="#d8c878" stroke-width=".7"/>
<path d="M3.5 4.5l5-1 1-1.5 4.5-.5v10.5l-10.5 3.5z" fill="url(#gf)"/>
<path d="M3.8 4.5v10.5" stroke="#c8aa38" stroke-width="1"/>
<path d="M3.5 15l10.5-3.5" stroke="#e0b820" stroke-width="1"/>
</svg>
<div class="t " style="left:688px;top:70px;">Свойства папки</div>
<div class="a" style="left:355px;top:65px;width:75px;height:22px;background:#d4d0c8;border-style:solid;border-width:1px 1px 0 1px;border-color:#fff #404040 #fff #fff;border-radius:2px 2px 0 0;box-shadow:inset -1px 0 #808080"></div>
<svg class="a" style="left:364px;top:67px" width="16" height="16" viewBox="0 0 16 16">
<path d="M0.5 6h3.5v9h-2z" fill="#fff6b0" stroke="#d8c878" stroke-width=".7"/>
<path d="M3.5 4.5l5-1 1-1.5 4.5-.5v10.5l-10.5 3.5z" fill="url(#gf)"/>
<path d="M3.8 4.5v10.5" stroke="#c8aa38" stroke-width="1"/>
<path d="M3.5 15l10.5-3.5" stroke="#e0b820" stroke-width="1"/>
</svg><svg class="a" style="left:370px;top:74px" width="9" height="9"><path d="M2 4v-1.5a2.5 2.5 0 0 1 5 0v1.5" stroke="#b08a10" fill="none"/><rect x="1" y="4" width="7" height="5" fill="#f0c020"/></svg>
<div class="t " style="left:386px;top:68px;">Доступ</div>
<div class="a" style="left:359px;top:93px;width:917px;height:877px;border:1px solid #808080;box-shadow:1px 1px #fff, inset 1px 1px #fff"></div>
<div class="a" style="left:367px;top:87px;width:129px;height:14px;background:#d4d0c8"></div>
<div class="t " style="left:369px;top:87px;">Пользователи и группы</div>
<div class="a sunken" style="left:365px;top:106px;width:870px;height:21px;background:#fff"></div>
<div class="t " style="left:368px;top:108px;">кунс</div>
<div class="a sbtn" style="left:1218px;top:108px;width:16px;height:17px"></div>
<svg class="a" style="left:1222px;top:114px" width="7" height="4"><path d="M0 0h7l-3.5 4z" fill="#000"/></svg>
<div class="a raised2" style="left:1239px;top:103px;width:27px;height:27px"></div>
<svg class="a" style="left:1245px;top:107px" width="18" height="18" viewBox="0 0 18 18">
<circle cx="8" cy="5" r="4" fill="#f0a860" stroke="#d08840" stroke-width=".5"/><path d="M4.5 3.5q3.5-3 7 0" stroke="#c8a070" fill="none"/>
<path d="M1.5 16q0-6 6.5-6t6.5 6z" fill="#60b858"/>
<path d="M10 12h7M13.5 8.5v7" stroke="#50b040" stroke-width="3"/></svg>
<div class="a" style="left:365px;top:136px;width:903px;height:829px;background:#fff;border-top:1px solid #808080;border-left:1px solid #808080"></div>
<div class="a" style="left:366px;top:137px;width:902px;height:16px;background:#d4d0c8"></div>
<div class="a" style="left:366px;top:137px;width:902px;height:1px;background:#fff"></div>
<div class="a" style="left:366px;top:137px;width:1px;height:16px;background:#fff"></div>
<div class="a" style="left:387px;top:139px;width:1px;height:13px;background:#808080;box-shadow:1px 0 #fff"></div>
<div class="a" style="left:1117px;top:139px;width:1px;height:13px;background:#808080;box-shadow:1px 0 #fff"></div>
<div class="t " style="left:394px;top:138px;">Имя</div>
<div class="t " style="left:1125px;top:138px;">Уровень доступа</div>
<svg class="a" style="left:1104px;top:141px" width="9" height="8"><path d="M4.5 .5l4 7h-8z" fill="none" stroke="#808080"/><path d="M.5 7.5h8l-4-7" fill="none" stroke="#fff"/></svg>
<div class="a" style="left:366px;top:154px;width:902px;height:21px;background:#0a246a"></div>
<div class="a" style="left:387px;top:154px;width:1px;height:21px;background:#b0c0e8"></div>
<div class="a" style="left:1117px;top:154px;width:1px;height:21px;background:#b0c0e8"></div>
<svg class="a" style="left:367px;top:155px" width="20" height="19" viewBox="0 0 20 19">
<path d="M1 16q0-6 5-6t5 6z" fill="#5a78e8"/><path d="M5 11l1 2 1-2" fill="#c0d8ff"/>
<circle cx="5.5" cy="7.5" r="3.3" fill="#d86a30" stroke="#301010" stroke-width=".6"/><path d="M2.3 6.5q3-4.5 6.5 0" stroke="#808098" stroke-width="1.3" fill="none"/>
<path d="M7.5 16q0-6.5 5.5-6.5t5.5 6.5z" fill="#58b858"/><path d="M12 10.5l1 2.5 1-2.5" fill="#e0ffe0"/>
<circle cx="13" cy="6" r="3.6" fill="#f8b860"/><path d="M9.6 5q3.4-4.5 6.8 0" stroke="#e8d090" stroke-width="1.2" fill="none"/></svg>
<div class="t " style="left:391px;top:157px;color:#fff">Бухгалтера</div>
<div class="t " style="left:1121px;top:157px;color:#fff">Автор без прав редактора</div>
<div class="a" style="left:408px;top:322px;width:824px;height:541px;background:#d4d0c8;border-style:solid;border-width:1px;border-color:#d4d0c8 #404040 #404040 #d4d0c8;box-shadow:inset 1px 1px #fff, inset -1px -1px #808080"></div>
<div class="a" style="left:412px;top:326px;width:816px;height:18px;background:#0a246a"></div>
<div class="t b" style="left:414px;top:327px;color:#fff;letter-spacing:0.16px">Сервер: BDC.elitstroy.kz - FossDoc</div>
<div class="a raised2" style="left:1210px;top:328px;width:16px;height:14px"></div>
<svg class="a" style="left:1213px;top:331px" width="9" height="8"><path d="M1 0.5l7 7M8 0.5l-7 7M1.8 0.5l7 7M7.2 0.5l-7 7" stroke="#000" stroke-width="1.1"/></svg>
<svg class="a" style="left:418px;top:352px" width="60" height="56" viewBox="0 0 60 56">
<defs><linearGradient id="gw" x1="0" y1="0" x2=".3" y2="1"><stop offset="0" stop-color="#ffff50"/><stop offset=".55" stop-color="#ffe600"/><stop offset="1" stop-color="#f0c800"/></linearGradient></defs>
<path d="M30.3 9.5q-1-1.5-2 0l-20 37q-1 3.5 2.5 3.5h37q3.5 0 2.5-3.5z" fill="#2a2060" stroke="#2a2060" stroke-width="2" stroke-linejoin="round"/>
<path d="M27.3 6.5q-1-1.5-2 0l-19 37.5q-1 3.5 2.5 3.5h37.5q3.5 0 2.5-3.5z" fill="url(#gw)" stroke="#f4d800" stroke-width="1.2" stroke-linejoin="round"/>
<path d="M24 21q0-3 3.5-3t3.5 3q0 3-3 16h-1q-3-13-3-16z" fill="#1a1040"/>
<circle cx="27.5" cy="42.4" r="3.4" fill="#1a1040"/></svg>
<div class="t" style="left:481px;top:355px;line-height:13px;letter-spacing:-0.07px">InvalidArgument=Значение '0' недопустимо для 'index'.<br>Имя параметра: index</div>
<div class="a" style="left:415px;top:417px;width:119px;height:23px;border:1px solid #000"></div>
<div class="a raised2" style="left:416px;top:418px;width:117px;height:21px"></div>
<div class="t" style="left:428px;top:422px;line-height:13px">Дополнительно &gt;&gt;</div>
<div class="a raised2" style="left:539px;top:417px;width:23px;height:23px"></div>
<svg class="a" style="left:542px;top:421px" width="18" height="15" viewBox="0 0 18 15">
<path d="M1.5 1.5h5l2 2v7h-7z" fill="#fff" stroke="#8090c8" stroke-width=".8"/><path d="M2 10.5h6.5" stroke="#304080"/>
<path d="M3 4h2M3 6h4M3 8h4" stroke="#6a88d0"/>
<path d="M7.5 4.5h5.5l3 3v6.5h-8.5z" fill="#fff" stroke="#3050a0" stroke-width=".9"/><path d="M13 4.5v3h3z" fill="#3a60b8"/>
<path d="M9 7.5h2M9 9.5h6M9 11.5h6" stroke="#5a80d0" stroke-width="1.2"/></svg>
<div class="a raised2" style="left:1150px;top:417px;width:75px;height:23px"></div>
<div class="t" style="left:1181px;top:422px;line-height:13px">OK</div>
<div class="a sunken" style="left:415px;top:452px;width:810px;height:404px;background:#d4d0c8"></div>
<div class="t" style="left:418px;top:456px;line-height:13px;letter-spacing:-0.2px">System.ArgumentOutOfRangeException: InvalidArgument=Значение '0' недопустимо для 'index'.<br>Имя параметра: index<br>&nbsp;&nbsp; в System.Windows.Forms.ComboBox.ObjectCollection.get_Item(Int32 index)<br>&nbsp;&nbsp; в System.Windows.Forms.ComboBox.get_SelectedItem()<br>&nbsp;&nbsp; в System.Windows.Forms.ComboBox.get_Text()<br>&nbsp;&nbsp; в Foss.FUIS.Controls.ReadOnlyComboBox.get_Text()<br>&nbsp;&nbsp; в Foss.FossDoc.ObjectModel.DataRepresentation.View.ObjectPropertyValueEditControl.ObjectReferenceValueEditorControl._ReloadComboBoxIfNeed()<br>&nbsp;&nbsp; в Foss.FossDoc.ObjectModel.DataRepresentation.View.ObjectPropertyValueEditControl.ObjectReferenceValueEditorControl.ResolveValue()<br>&nbsp;&nbsp; в<br>Foss.FossDoc.ObjectModel.DataRepresentation.View.ObjectPropertyValueEditControl.ObjectReferenceValueEditorControl._ComboBox_DisplayName_DropDownClose<br>d(Object sender, EventArgs e)<br>&nbsp;&nbsp; в System.Windows.Forms.ComboBox.OnDropDownClosed(EventArgs e)<br>&nbsp;&nbsp; в System.Windows.Forms.ComboBox.WmReflectCommand(Message&amp; m)<br>&nbsp;&nbsp; в System.Windows.Forms.ComboBox.WndProc(Message&amp; m)<br>&nbsp;&nbsp; в System.Windows.Forms.Control.ControlNativeWindow.OnMessage(Message&amp; m)<br>&nbsp;&nbsp; в System.Windows.Forms.Control.ControlNativeWindow.WndProc(Message&amp; m)<br>&nbsp;&nbsp; в System.Windows.Forms.NativeWindow.Callback(IntPtr hWnd, Int32 msg, IntPtr wparam, IntPtr lparam)</div>
<div class="a checker" style="left:1207px;top:454px;width:16px;height:400px"></div>
<div class="a sbtn" style="left:1207px;top:454px;width:16px;height:16px"></div>
<svg class="a" style="left:1211px;top:459px" width="8" height="5"><path d="M0 4h7l-3.5-4z" fill="#808080"/><path d="M1 5h7" stroke="#fff"/></svg>
<div class="a sbtn" style="left:1207px;top:838px;width:16px;height:16px"></div>
<svg class="a" style="left:1211px;top:844px" width="8" height="5"><path d="M0 0h7l-3.5 4z" fill="#808080"/></svg>
<div class="a" style="left:0;top:996px;width:1280px;height:28px;background:#d4d0c8;border-top:1px solid #d4d0c8;box-shadow:inset 0 1px #fff"></div>
<div class="a raised2" style="left:2px;top:1000px;width:51px;height:22px"></div>
<svg class="a" style="left:4px;top:1002px" width="17" height="17" viewBox="0 0 17 17">
<path d="M3 2.5q2.5-2 6 0l-1.3 5.5q-3-1.8-6 0z" fill="#f04a18"/>
<path d="M9.8 2.8q3 1.8 6 0l-1.3 5.5q-3 1.8-6 0z" fill="#58b030"/>
<path d="M1.5 8.8q3-1.8 6 0l-1.3 5.5q-3-1.8-6 0z" fill="#2a88e0"/>
<path d="M8.3 9.1q3 1.8 6 0l-1.3 5.5q-3 1.8-6 0z" fill="#f8c418"/></svg>
<div class="t b" style="left:21px;top:1003px;letter-spacing:0.5px">Пуск</div>
<div class="a" style="left:60px;top:1002px;width:3px;height:18px;border-style:solid;border-width:1px;border-color:#fff #808080 #808080 #fff"></div>
<svg class="a" style="left:80px;top:1003px" width="16" height="16" viewBox="0 0 16 16">
<rect x="1" y="1" width="8" height="12" fill="#c8d0d8" stroke="#8090a0" stroke-width=".6"/><path d="M2 3h6M2 5h6" stroke="#708090"/>
<rect x="6" y="9" width="9" height="6" fill="#a8b4c0" stroke="#607080" stroke-width=".6"/></svg>
<div class="a raised2" style="left:105px;top:1000px;width:158px;height:22px"></div>
<svg class="a" style="left:109px;top:1003px" width="16" height="16" viewBox="0 0 16 16">
<rect x="8" y="2" width="7" height="10" rx="1" fill="url(#gcyl)"/><ellipse cx="11.5" cy="2.5" rx="3.5" ry="1.5" fill="#fff0a0"/>
<rect x="2" y="5" width="7" height="10" rx="1" fill="url(#gcyl)"/><ellipse cx="5.5" cy="5.5" rx="3.5" ry="1.5" fill="#fff0a0"/></svg>
<div class="t " style="left:128px;top:1004px;">"Заявки на платеж - От...</div>
<div class="a checker" style="left:265px;top:1000px;width:159px;height:22px;border-style:solid;border-width:1px;border-color:#404040 #fff #fff #404040;box-shadow:inset 1px 1px #808080"></div>
<svg class="a" style="left:270px;top:1003px" width="16" height="16" viewBox="0 0 16 16">
<circle cx="8" cy="8" r="7" fill="#f0d800" stroke="#c0a000" stroke-width=".8" stroke-dasharray="3 1.2"/><circle cx="8" cy="8" r="5.5" fill="#f8e020"/><circle cx="8" cy="8" r="1.8" fill="#fff" stroke="#a08000" stroke-width=".6"/></svg>
<div class="t b" style="left:289px;top:1005px;letter-spacing:0.17px">Сервер: BDC.elitstroy...</div>
<div class="a raised2" style="left:427px;top:1000px;width:160px;height:22px"></div>
<svg class="a" style="left:432px;top:1003px" width="16" height="16" viewBox="0 0 16 16">
<circle cx="8" cy="8" r="7" fill="#f0d800" stroke="#c0a000" stroke-width=".8" stroke-dasharray="3 1.2"/><circle cx="8" cy="8" r="5.5" fill="#f8e020"/><circle cx="8" cy="8" r="1.8" fill="#fff" stroke="#a08000" stroke-width=".6"/></svg>
<div class="t " style="left:450px;top:1004px;">FossDoc Администрато...</div>
<div class="a" style="left:1033px;top:1002px;width:3px;height:18px;border-style:solid;border-width:1px;border-color:#fff #808080 #808080 #fff"></div>
<div class="t " style="left:1044px;top:1003px;">RU</div>
<div class="a" style="left:1064px;top:1002px;width:2px;height:18px;border-left:1px solid #808080;border-right:1px solid #fff"></div>
<div class="a" style="left:1068px;top:1000px;width:210px;height:22px;border-style:solid;border-width:1px;border-color:#808080 #fff #fff #808080"></div>
<svg class="a" style="left:1075px;top:1003px" width="16" height="16"><path d="M2.5 1v14" stroke="#808080" stroke-width="1.5"/><path d="M3 2h6l1 2h4l-2 3 2 3h-5l-1-2h-5z" fill="#fff" stroke="#909090" stroke-width=".8"/></svg>
<svg class="a" style="left:1099px;top:1003px" width="17" height="17"><rect x="3" y="1" width="5" height="5" fill="#a0a0a0"/><rect x="2" y="5" width="7" height="7" fill="#606060"/><path d="M5.5 12v4" stroke="#606060" stroke-width="2"/><circle cx="12" cy="12" r="4.5" fill="#20a020"/><path d="M9.5 12l2 2 3-3.5" stroke="#fff" stroke-width="1.3" fill="none"/></svg>
<svg class="a" style="left:1123px;top:1003px" width="16" height="16"><circle cx="8" cy="8" r="7" fill="#e8f0f8" stroke="#b0c4d8"/><path d="M6.5 4.5l4 3.5-4 3.5z" fill="#3070c8"/></svg>
<svg class="a" style="left:1147px;top:1003px" width="16" height="16"><path d="M8 1l7 2v6q0 5-7 7-7-2-7-7v-6z" fill="#40b020" stroke="#208010" stroke-width=".6"/><path d="M3 6l5 3M13 6l-5 3M4 11h8" stroke="#c01010" stroke-width="2"/></svg>
<svg class="a" style="left:1170px;top:1003px" width="17" height="16"><rect x="6" y="3" width="10" height="8" fill="#d8d8d8" stroke="#707070"/><path d="M9 13h5M11.5 11v2" stroke="#707070"/><path d="M2 1v14M0.5 3q1.5 3 3 0" stroke="#707070" stroke-width="1.2" fill="none"/></svg>
<svg class="a" style="left:1193px;top:1003px" width="18" height="17"><path d="M1 6h3l4-4v12l-4-4h-3z" fill="#f0f0f0" stroke="#909090"/><circle cx="12.5" cy="12" r="4" fill="#e02020"/><path d="M10.5 10l4 4M14.5 10l-4 4" stroke="#fff" stroke-width="1.2"/></svg>
<div class="t " style="left:1225px;top:1004px;">16:58</div>
<svg class="a" style="left:1261px;top:1004px" width="15" height="13"><rect x=".5" y=".5" width="14" height="12" fill="#6aa0e8" stroke="#3060a0"/><rect x="1" y="1" width="13" height="5" fill="#a8c8f0"/><rect x="2" y="9" width="11" height="2" fill="#2050a0"/></svg>
</body></html>
